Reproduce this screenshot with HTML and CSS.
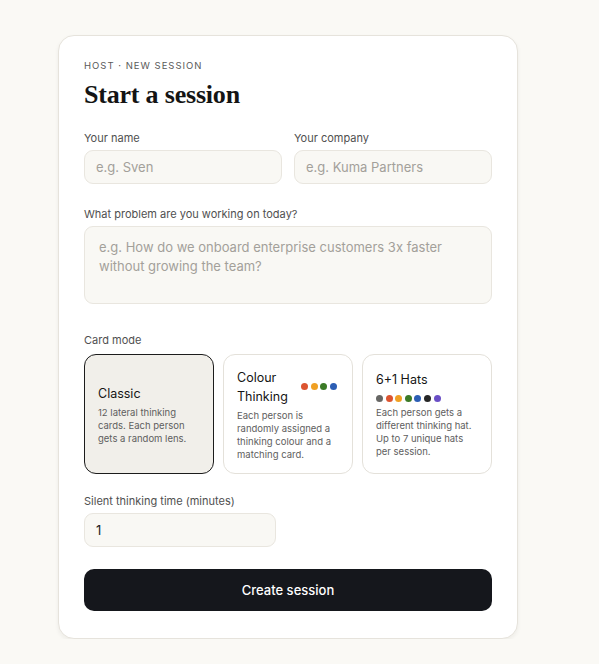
FILE: index.html
```html
<!DOCTYPE html>
<html lang="en">
<head>
<meta charset="utf-8">
<title>Start a session</title>
<link rel="stylesheet" href="styles.css">
</head>
<body>
<main class="page">
  <section class="card">
    <p class="eyebrow">HOST · NEW SESSION</p>
    <h1 class="title">Start a session</h1>

    <div class="row">
      <div class="field">
        <label class="label">Your name</label>
        <div class="input placeholder">e.g. Sven</div>
      </div>
      <div class="field">
        <label class="label">Your company</label>
        <div class="input placeholder">e.g. Kuma Partners</div>
      </div>
    </div>

    <div class="field field-problem">
      <label class="label">What problem are you working on today?</label>
      <div class="textarea placeholder">e.g. How do we onboard enterprise customers 3x faster without growing the team?</div>
    </div>

    <div class="field field-mode">
      <label class="label">Card mode</label>
      <div class="modes">
        <div class="mode selected">
          <div class="mode-title">Classic</div>
          <p class="mode-desc">12 lateral thinking cards. Each person gets a random lens.</p>
        </div>
        <div class="mode">
          <div class="mode-head">
            <div class="mode-title two-line">Colour Thinking</div>
            <div class="dots">
              <span class="dot red"></span><span class="dot orange"></span><span class="dot green"></span><span class="dot blue"></span>
            </div>
          </div>
          <p class="mode-desc">Each person is randomly assigned a thinking colour and a matching card.</p>
        </div>
        <div class="mode">
          <div class="mode-title">6+1 Hats</div>
          <div class="dots dots-below">
            <span class="dot grey"></span><span class="dot red"></span><span class="dot orange"></span><span class="dot green"></span><span class="dot blue"></span><span class="dot black"></span><span class="dot purple"></span>
          </div>
          <p class="mode-desc tight">Each person gets a different thinking hat. Up to 7 unique hats per session.</p>
        </div>
      </div>
    </div>

    <div class="field field-time">
      <label class="label">Silent thinking time (minutes)</label>
      <div class="input input-short value">1</div>
    </div>

    <button class="btn" type="button">Create session</button>
  </section>
</main>
</body>
</html>
```
FILE: styles.css
```css
* { box-sizing: border-box; }
html, body { margin: 0; padding: 0; }
body {
  background: #faf9f5;
  font-family: Inter, "Noto Sans", "Liberation Sans", sans-serif;
  color: #1a1a1a;
}
.page {
  padding: 35px 0 0 58px;
}
.card {
  width: 460px;
  background: #ffffff;
  border: 1px solid #e6e3dc;
  border-radius: 16px;
  box-shadow: 0 2px 4px rgba(40, 30, 10, 0.06);
  padding: 23px 25px 27px 25px;
}
.eyebrow {
  margin: 0;
  font-size: 9.5px;
  line-height: 13px;
  letter-spacing: 1px;
  color: #5a5a5a;
}
.title {
  margin: 7px 0 0 0;
  font-family: "Liberation Serif", "DejaVu Serif", serif;
  font-weight: 700;
  font-size: 26px;
  line-height: 32px;
  color: #141414;
  letter-spacing: -0.2px;
}
.row {
  display: grid;
  grid-template-columns: 1fr 1fr;
  gap: 12px;
  margin-top: 20px;
}
.field { display: flex; flex-direction: column; }
.label {
  font-size: 11px;
  line-height: 14px;
  color: #505050;
  margin-bottom: 5px;
}
.input, .textarea {
  background: #f9f8f4;
  border: 1px solid #e9e6df;
  border-radius: 9px;
  font-size: 13px;
  padding: 0 11px;
}
.input {
  height: 34px;
  display: flex;
  align-items: center;
}
.placeholder { color: #a3a09a; }
.value { color: #222; }
.field-problem { margin-top: 23px; }
.textarea {
  height: 78px;
  padding: 11px 14px;
  line-height: 19px;
}
.field-mode { margin-top: 29px; }
.field-mode .label { margin-bottom: 7px; }
.modes {
  display: grid;
  grid-template-columns: repeat(3, 1fr);
  gap: 9px;
}
.mode {
  height: 120px;
  border: 1px solid #e4e1da;
  border-radius: 12px;
  background: #fff;
  padding: 0 13px;
  display: flex;
  flex-direction: column;
  justify-content: center;
}
.mode.selected {
  background: #f1efea;
  border-color: #1c1c1c;
}
.mode-title {
  font-size: 12.5px;
  line-height: 19px;
  color: #151515;
}
.mode-head {
  display: flex;
  align-items: center;
  gap: 6px;
}
.two-line { width: 58px; flex: none; }
.mode-desc {
  margin: 3px 0 0 0;
  font-size: 9.5px;
  line-height: 13px;
  color: #5e5e5e;
}
.mode-desc.tight { margin-top: 4px; }
.dots {
  display: flex;
  gap: 2.6px;
}
.dots-below { margin-top: 6px; }
.dot {
  width: 7px;
  height: 7px;
  border-radius: 50%;
  display: block;
}
.red { background: #dc5430; }
.orange { background: #f0a024; }
.green { background: #3b7a26; }
.blue { background: #2c5eb4; }
.grey { background: #666664; }
.black { background: #262626; }
.purple { background: #6a4fc6; }
.field-time { margin-top: 20px; }
.input-short { width: 192px; }
.btn {
  margin-top: 22px;
  width: 100%;
  height: 42px;
  border: none;
  border-radius: 10px;
  background: #15171c;
  color: #ffffff;
  font-family: Inter, "Noto Sans", "Liberation Sans", sans-serif;
  font-size: 13px;
  font-weight: 500;
  display: block;
}
```
